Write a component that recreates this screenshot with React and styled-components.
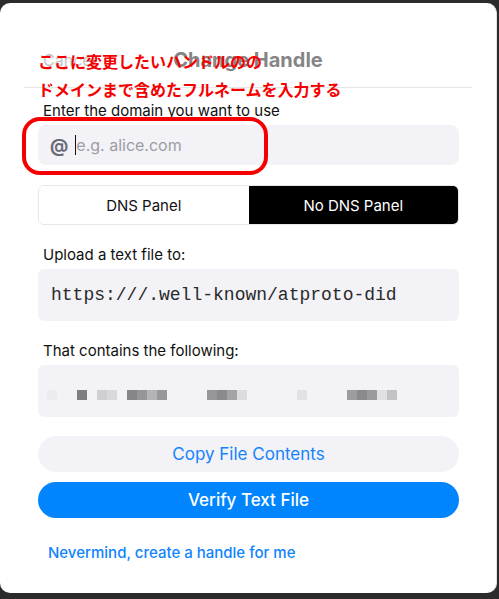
import React from 'react';
import styled, { createGlobalStyle } from 'styled-components';

const GlobalStyle = createGlobalStyle`
  html, body {
    margin: 0;
    padding: 0;
    background: #2b2b2b;
  }
  body {
    font-family: Inter, "Noto Sans", "Noto Sans CJK JP", sans-serif;
    -webkit-font-smoothing: antialiased;
  }
`;

// trozos del texto pixelado (color, espacio hasta el siguiente)
const pixeles = [
  { c: '#ececef', gap: 20 },
  { c: '#7e7e82', gap: 10 },
  { c: '#cfcfd3', gap: 0 },
  { c: '#d9d9dd', gap: 10 },
  { c: '#86868a', gap: 0 },
  { c: '#96969a', gap: 0 },
  { c: '#b4b4b8', gap: 0 },
  { c: '#98989c', gap: 40 },
  { c: '#96969a', gap: 0 },
  { c: '#8a8a8e', gap: 0 },
  { c: '#a3a3a7', gap: 0 },
  { c: '#dcdce0', gap: 50 },
  { c: '#e2e2e6', gap: 40 },
  { c: '#9c9ca0', gap: 0 },
  { c: '#8a8a8e', gap: 0 },
  { c: '#9a9a9e', gap: 0 },
  { c: '#e0e0e4', gap: 0 },
  { c: '#c2c2c6', gap: 0 },
];

const Pantalla = () => {
  return (
    <>
      <GlobalStyle />
      <Fondo>
        <Tarjeta>
          <Cabecera>
            <Cancelar>Cancel</Cancelar>
            <Titulo>Change Handle</Titulo>
            <span />
          </Cabecera>

          <Cuerpo>
            <Campo>
              <Etiqueta>Enter the domain you want to use</Etiqueta>
              <CajaInput>
                <Arroba>@</Arroba>
                <Cursor />
                <Placeholder>e.g. alice.com</Placeholder>
              </CajaInput>
            </Campo>

            <Segmentos>
              <Segmento>DNS Panel</Segmento>
              <Segmento $activo>No DNS Panel</Segmento>
            </Segmentos>

            <Campo $arriba={21}>
              <Etiqueta>Upload a text file to:</Etiqueta>
              <Codigo>https:///.well-known/atproto-did</Codigo>
            </Campo>

            <Campo $arriba={21}>
              <Etiqueta>That contains the following:</Etiqueta>
              <Codigo>
                <Pixelado>
                  {pixeles.map((p, i) => (
                    <Pixel key={i} $c={p.c} $gap={p.gap} />
                  ))}
                </Pixelado>
              </Codigo>
            </Campo>

            <Botones>
              <Boton>Copy File Contents</Boton>
              <Boton $primario>Verify Text File</Boton>
            </Botones>

            <Enlace>Nevermind, create a handle for me</Enlace>
          </Cuerpo>

          {/* anotaciones en rojo encima de la captura */}
          <Nota>
            <LineaNota>ここに変更したいハンドルのの</LineaNota>
            <LineaNota>ドメインまで含めたフルネームを入力する</LineaNota>
          </Nota>
          <Marco />
        </Tarjeta>
      </Fondo>
    </>
  );
};

const Fondo = styled.div`
  width: 499px;
  height: 599px;
  padding: 3px 2px 6px 0;
  box-sizing: border-box;
`;

const Tarjeta = styled.div`
  position: relative;
  height: 100%;
  background: #fff;
  border-radius: 10px;
  border-right: 1px solid #e4e4e4;
  box-sizing: border-box;
`;

const Cabecera = styled.div`
  display: grid;
  grid-template-columns: 1fr auto 1fr;
  align-items: center;
  margin: 0 24px;
  padding: 45px 0 15px;
  border-bottom: 1px solid #e6e6e6;
`;

const Cancelar = styled.span`
  padding-left: 19px;
  font-size: 16px;
  color: #c4c4c4;
`;

const Titulo = styled.span`
  font-size: 20px;
  line-height: 24px;
  font-weight: 700;
  color: #858585;
`;

const Cuerpo = styled.div`
  display: flex;
  flex-direction: column;
  padding: 14px 37px 0 38px;
`;

const Campo = styled.div`
  display: flex;
  flex-direction: column;
  gap: 5px;
  margin-top: ${(p) => (p.$arriba ? p.$arriba : 0)}px;
`;

const Etiqueta = styled.div`
  padding-left: 5px;
  font-size: 15px;
  line-height: 18px;
  color: #111;
`;

const CajaInput = styled.div`
  display: flex;
  align-items: center;
  height: 40px;
  padding: 0 12px;
  background: #f2f2f7;
  border-radius: 8px;
`;

const Arroba = styled.span`
  font-size: 18px;
  font-weight: 700;
  color: #6b6b76;
`;

const Cursor = styled.span`
  width: 1px;
  height: 20px;
  margin-left: 7px;
  background: #111;
`;

const Placeholder = styled.span`
  font-size: 16px;
  color: #9d9da3;
`;

const Segmentos = styled.div`
  display: grid;
  grid-template-columns: 1fr 1fr;
  height: 40px;
  margin-top: 20px;
  border: 1px solid #ece4ec;
  border-radius: 6px;
  overflow: hidden;
  box-sizing: border-box;
`;

const Segmento = styled.div`
  display: flex;
  align-items: center;
  justify-content: center;
  font-size: 15px;
  background: ${(p) => (p.$activo ? '#000' : '#fff')};
  color: ${(p) => (p.$activo ? '#fff' : '#111')};
`;

const Codigo = styled.div`
  display: flex;
  align-items: center;
  height: 52px;
  padding: 0 13px;
  background: #f2f2f7;
  border-radius: 6px;
  font-family: "Liberation Mono", "DejaVu Sans Mono", monospace;
  font-size: 18px;
  color: #2a2a2a;
`;

const Pixelado = styled.div`
  display: flex;
  align-items: center;
  margin: 8px 0 0 -4px;
`;

const Pixel = styled.span`
  width: 10px;
  height: 10px;
  margin-right: ${(p) => p.$gap}px;
  background: ${(p) => p.$c};
`;

const Botones = styled.div`
  display: flex;
  flex-direction: column;
  gap: 10px;
  margin-top: 19px;
`;

const Boton = styled.button`
  height: 36px;
  border: none;
  border-radius: 18px;
  font-family: inherit;
  font-size: 17px;
  font-weight: ${(p) => (p.$primario ? 500 : 400)};
  background: ${(p) => (p.$primario ? '#0085ff' : '#f2f2f7')};
  color: ${(p) => (p.$primario ? '#fff' : '#1583fd')};
`;

const Enlace = styled.div`
  margin-top: 26px;
  padding-left: 10px;
  font-size: 15px;
  line-height: 18px;
  font-weight: 500;
  color: #1083fe;
`;

const Nota = styled.div`
  position: absolute;
  left: 38px;
  top: 48px;
  display: flex;
  flex-direction: column;
  gap: 8px;
`;

const LineaNota = styled.div`
  font-family: "Noto Sans CJK JP", sans-serif;
  font-size: 16px;
  line-height: 20px;
  font-weight: 700;
  color: #f50000;
`;

const Marco = styled.div`
  position: absolute;
  left: 22px;
  top: 114px;
  width: 246px;
  height: 58px;
  border: 4px solid #f50000;
  border-radius: 18px;
  box-sizing: border-box;
`;

export default Pantalla;
